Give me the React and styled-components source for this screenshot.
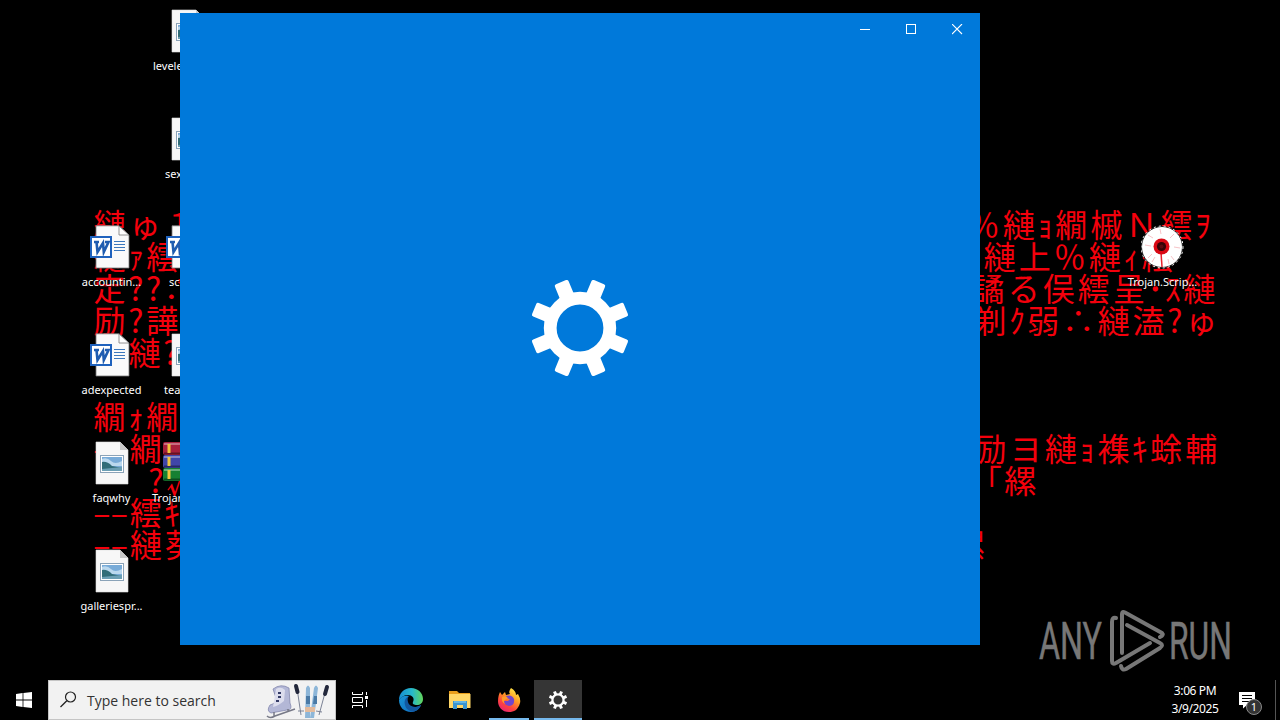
import { useState } from "react";
import styled, { createGlobalStyle } from "styled-components";

const GlobalStyle = createGlobalStyle`
body{
    margin: 0;
    background: #000;
    overflow: hidden;
}
*{
    box-sizing: border-box;
}
`;

const FULL = 35.1;
const HALF = 17.6;

// runs of wallpaper text, half width glyphs take half a cell
const wallpaper = [
    { x: 92, y: 207, text: "縺ゅ１" },
    { x: 92, y: 239, text: "縺ｧ繧" },
    { x: 92, y: 271, text: "定??∴" },
    { x: 92, y: 303, text: "励?譁" },
    { x: 127, y: 335, text: "縺?" },
    { x: 92, y: 399, text: "繝ｫ繝" },
    { x: 93, y: 431, text: "– 繝ｯ" },
    { x: 147, y: 463, text: "?√" },
    { x: 93, y: 495, text: "––繧ｷ" },
    { x: 93, y: 527, text: "––縺葵" },
    { x: 966, y: 207, text: "％縺ｮ繝槭Ｎ繧ｦ" },
    { x: 982, y: 239, text: "縺上％縺ｨ繧" },
    { x: 971, y: 271, text: "譎る俣繧呈･ｽ縺" },
    { x: 973, y: 303, text: "剃ｸ弱∴縺溘?ゅ" },
    { x: 973, y: 431, text: "励ヨ縺ｮ襍ｷ蜍輔" },
    { x: 985, y: 463, text: "｢縲" },
    { x: 951, y: 527, text: "縲" },
];

const desktopLeft = [
    { icon: null },
    { icon: null },
    { icon: "word", label: "accountin..." },
    { icon: "word", label: "adexpected" },
    { icon: "image", label: "faqwhy" },
    { icon: "image", label: "galleriespr..." },
];

const desktopSecond = [
    { icon: "image", label: "levele", start: 4 },
    { icon: "image", label: "sex", start: 16 },
    { icon: "word", label: "sc", start: 20 },
    { icon: "image", label: "tea", start: 15 },
    { icon: "archive", label: "Trojan", start: 3 },
];

function isHalf(char) {
    const code = char.charCodeAt(0);
    return code < 128 || char === "–" || (code >= 0xff61 && code <= 0xff9f);
}

function Wallpaper() {
    return (
        <>
            {wallpaper.map(({ x, y, text }) => (
                <TextRun key={`${x}-${y}`} $x={x} $y={y}>
                    {[...text].map((char, index) => (
                        <Glyph key={index} $half={isHalf(char)}>{char}</Glyph>
                    ))}
                </TextRun>
            ))}
        </>
    );
}

function ImageIcon() {
    return (
        <svg width="44" height="44" viewBox="0 0 44 44">
            <path d="M6 1H30L38 9V43H6Z" fill="#f7f7f7" stroke="#ddd" strokeWidth=".6" />
            <path d="M30 1V9H38Z" fill="#c9c9c9" />
            <rect x="10.5" y="14.5" width="23" height="17" fill="#fff" stroke="#8ba3b8" />
            <rect x="12" y="16" width="20" height="14" fill="#78abd8" />
            <path d="M12 18Q17 16 21 20T32 20V25H12Z" fill="#bad8ee" />
            <path d="M12 21Q17 20 22 25L32 27V30H12Z" fill="#316d78" />
            <path d="M12 28L32 26V30H12Z" fill="#6b9fb4" />
        </svg>
    );
}

function WordIcon() {
    return (
        <svg width="44" height="44" viewBox="0 0 44 44">
            <path d="M6 .8H29L39 10V43H6Z" fill="#fafafa" stroke="#777" strokeWidth=".8" />
            <path d="M29 1V10H39Z" fill="#fff" stroke="#777" strokeWidth=".8" />
            <path d="M24 16.5H35M24 19.5H35M24 22.5H35M24 25.5H35" stroke="#3c78bd" strokeWidth="1" />
            <rect x="1" y="12" width="20" height="20" fill="#fff" stroke="#1f62bd" strokeWidth="2" />
            <path d="M4 17H9M6.5 17L7.5 27L13 18L13.8 27L18.5 17H15" fill="none" stroke="#1f5cb0" strokeWidth="2.6" />
        </svg>
    );
}

function ArchiveIcon() {
    return (
        <svg width="50" height="44" viewBox="-3 0 50 44">
            <rect x="-3" y="1" width="48" height="13" rx="2" fill="#a8203c" />
            <rect x="-3" y="14" width="48" height="13" rx="2" fill="#4046a8" />
            <rect x="-3" y="27" width="48" height="13" rx="2" fill="#168032" />
            <path d="M-2 3H44M-2 16H44M-2 29H44" stroke="#fff" strokeOpacity=".35" strokeWidth="2" />
            <path d="M-2 12.5H44M-2 25.5H44M-2 38.5H44" stroke="#000" strokeOpacity=".4" strokeWidth="2" />
            <path d="M3 3V12M3 16V25M3 29V38" stroke="#f0c53d" strokeWidth="3" />
        </svg>
    );
}

function EyeIcon() {
    return (
        <svg width="44" height="44" viewBox="0 0 44 44">
            <circle cx="21" cy="22" r="20.5" fill="#fff" stroke="#222" />
            <circle cx="21" cy="22" r="21" fill="none" stroke="#fff" strokeDasharray="2 3" />
            <path d="M7 10l5 3M4 20l6 1M7 33l4-4M19 4l1 5M33 9l-4 4M39 23l-6-1M33 35l-3-4M11 37l3-5M28 39l-1-5" stroke="#f7c4c8" fill="none" />
            <path d="M20 27L21 42" stroke="#e8202b" strokeWidth="1.5" />
            <circle cx="20.5" cy="21.5" r="8" fill="#d90814" />
            <circle cx="20.5" cy="21.5" r="4.6" fill="#350407" />
            <circle cx="20.5" cy="21.5" r="2" fill="#5a0b10" />
        </svg>
    );
}

const icons = { image: ImageIcon, word: WordIcon, archive: ArchiveIcon, eye: EyeIcon };

function DesktopItem(props) {
    const { icon, label, start } = props;
    const Icon = icons[icon];
    return (
        <Item>
            {Icon && <Icon />}
            {label && <Label $start={start}>{label}</Label>}
        </Item>
    );
}

function SettingsGear() {
    return (
        <svg width="100" height="100" viewBox="-50 -50 100 100">
            <circle r="29.8" fill="none" stroke="#fff" strokeWidth="12.8" />
            {[0, 1, 2, 3, 4, 5, 6, 7].map(n => (
                <rect
                    key={n}
                    x="-7.4"
                    y="-49.6"
                    width="14.8"
                    height="19"
                    rx="2"
                    fill="#fff"
                    transform={`rotate(${22.5 + n * 45})`}
                />
            ))}
        </svg>
    );
}

function AppWindow({ onClose }) {
    return (
        <Window>
            <TitleBar>
                <Caption aria-label="Minimize">
                    <svg width="11" height="11"><path d="M0 5.5H10" stroke="#fff" /></svg>
                </Caption>
                <Caption aria-label="Maximize">
                    <svg width="11" height="11"><rect x=".5" y=".5" width="9" height="9" fill="none" stroke="#fff" /></svg>
                </Caption>
                <Caption aria-label="Close" onClick={onClose}>
                    <svg width="11" height="11"><path d="M0 0L10 10M10 0L0 10" stroke="#fff" strokeWidth="1.1" /></svg>
                </Caption>
            </TitleBar>
            <Splash><SettingsGear /></Splash>
        </Window>
    );
}

function Watermark() {
    return (
        <Brand>
            <svg width="200" height="70" viewBox="0 0 200 70">
                <g fill="#777" stroke="#777" strokeWidth=".5" fontFamily="Roboto, sans-serif" fontSize="51">
                    <text x="4" y="54" textLength="63" lengthAdjust="spacingAndGlyphs">ANY</text>
                    <text x="134" y="54" textLength="63" lengthAdjust="spacingAndGlyphs">RUN</text>
                </g>
                <g fill="none" stroke="#777" strokeWidth="4" strokeLinecap="round" strokeLinejoin="round">
                    <path d="M87 48V9Q87 6 90 7.5L127 28Q129 30 125 32" />
                    <path d="M81 13Q77 12 77 17V56Q77 60 81 58L115 38" />
                    <path d="M92 20L125 38Q129 40 125 43L91 64Q87 66 86 61" />
                </g>
            </svg>
        </Brand>
    );
}

function SportsArt() {
    return (
        <svg width="66" height="38" viewBox="0 0 66 38">
            <path d="M7 8Q15 2 23 7L24 22Q27 29 21 29L5 32Q0 30 4 24Q11 22 10 17Z" fill="#b3b7d6" stroke="#7b80a8" strokeWidth=".7" />
            <path d="M10 8Q15 5 19 9L18 20Q12 25 7 26" fill="#dcdded" />
            <path d="M12 12h3M12 16h3M10 20h3" stroke="#343b66" strokeWidth="1.8" />
            <path d="M1 35Q4 38 9 35L29 28M8 31V35M22 28V31" fill="none" stroke="#777987" strokeWidth="1.5" />
            <path d="M31 7L35 34M60 8L53 34" stroke="#7b8295" />
            <path d="M30 5L31.5 11M61 6L59 13" stroke="#22273b" strokeWidth="4" strokeLinecap="round" />
            <path d="M32 30L38 30M50 30L56 31" stroke="#7b8295" />
            <path d="M40 7Q42 2 44 7V37H39ZM48 7Q50 2 52 7L48 37H44Z" fill="#8db6d8" />
            <path d="M40 15H44V23H40M48 15H51V23H47" fill="#4a7aa6" />
            <path d="M39 26H49V31H39" fill="#e2bb9d" />
        </svg>
    );
}

function EdgeIcon() {
    return (
        <svg width="24" height="24" viewBox="0 0 24 24">
            <defs>
                <linearGradient id="edgeTop" x1="0" x2="1">
                    <stop stopColor="#168dd3" /><stop offset=".55" stopColor="#27b9cb" /><stop offset="1" stopColor="#62d65a" />
                </linearGradient>
                <linearGradient id="edgeLow" x1="0" x2="1" y2="1">
                    <stop stopColor="#1993d5" /><stop offset="1" stopColor="#0f6bbd" />
                </linearGradient>
            </defs>
            <path d="M0 12C0 5 5 0 12 0S24 5 24 11C24 15 21 17 18 17C15 17 13 16 14 14C16 10 13 7 9 7C5 7 2 9 0 12Z" fill="url(#edgeTop)" />
            <path d="M0 12C2 8 6 7 10 8C7 10 7 13 9 16C12 20 18 20 22 17C20 22 16 24 12 24C5 24 0 19 0 12Z" fill="url(#edgeLow)" />
            <path d="M10 8C6 10 5 13 6 17C7 21 10 23 14 23.8C18 23 21 20 22 17C16 21 10 18 9 14C8 11 9 9 10 8Z" fill="#1258a0" />
        </svg>
    );
}

function FolderIcon() {
    return (
        <svg width="22" height="20" viewBox="0 0 22 20">
            <path d="M0 1H8L10 3H21V18H0Z" fill="#e99e1c" />
            <path d="M0 4H21.5V18H0Z" fill="#ffd667" />
            <path d="M4 11H18V19H14V15H8V19H4Z" fill="#3a94d0" />
            <path d="M5 11H17V13H5Z" fill="#62b5e5" />
        </svg>
    );
}

function FirefoxIcon() {
    return (
        <svg width="24" height="25" viewBox="0 0 24 25">
            <defs>
                <linearGradient id="fox" x1=".8" y1="0" x2=".2" y2="1">
                    <stop stopColor="#fff14a" /><stop offset=".4" stopColor="#ff9a24" /><stop offset=".7" stopColor="#ff443c" /><stop offset="1" stopColor="#e52078" />
                </linearGradient>
            </defs>
            <path d="M3 4L5 7L8 4L9 7L13 6Q11 4 14 0Q19 3 19 7L21 6Q24 11 23 15C21 22 17 24 12 24C5 24 1 19 1 13C1 9 2 6 3 4Z" fill="url(#fox)" />
            <path d="M9 8Q15 6 17 11Q18 18 12 18Q7 17 7 13L11 13L13 11Q10 11 9 8Z" fill="#7145cc" />
            <path d="M5 9Q8 7 11 10L8 12Q6 13 8 16Q4 14 5 9Z" fill="#ff9b28" />
        </svg>
    );
}

function SmallGear() {
    return (
        <svg width="20" height="20" viewBox="-10 -10 20 20">
            <circle r="5.6" fill="none" stroke="#fff" strokeWidth="2.3" />
            {[0, 1, 2, 3, 4, 5, 6, 7].map(n => (
                <rect key={n} x="-1.5" y="-9.2" width="3" height="3.5" fill="#fff" transform={`rotate(${22.5 + n * 45})`} />
            ))}
        </svg>
    );
}

function Taskbar({ onSettings }) {
    return (
        <Bar>
            <StartButton aria-label="Start">
                <svg width="16" height="16" viewBox="0 0 16 16">
                    <path d="M0 2L6.6 1.1V7.4H0ZM7.4 1L16 0V7.4H7.4ZM0 8.4H6.6V14.9L0 14ZM7.4 8.4H16V16L7.4 15Z" fill="#fff" />
                </svg>
            </StartButton>
            <SearchBox>
                <svg width="18" height="18" viewBox="0 0 18 18">
                    <circle cx="11.5" cy="6" r="5" fill="none" stroke="#222" strokeWidth="1.2" />
                    <path d="M7.8 9.7L1.5 16" stroke="#222" strokeWidth="1.3" />
                </svg>
                <SearchText>Type here to search</SearchText>
                <SportsArt />
            </SearchBox>
            <TaskButton>
                <svg width="16" height="16" viewBox="0 0 16 16">
                    <path d="M.5 0V2.5H10.5V0M.5 16V13.5H10.5V16M.5 5.5H10.5V10.5H.5ZM14.5 0V3M14.5 8V15" fill="none" stroke="#fff" />
                    <rect x="13" y="4" width="3" height="3" fill="#fff" />
                </svg>
            </TaskButton>
            <TaskButton $width={54}><EdgeIcon /></TaskButton>
            <TaskButton $width={44}><FolderIcon /></TaskButton>
            <TaskButton $width={50} $gap={2} $running><FirefoxIcon /></TaskButton>
            <TaskButton $active onClick={onSettings}><SmallGear /></TaskButton>
            <Tray>
                <Clock>
                    <span>3:06 PM</span>
                    <span>3/9/2025</span>
                </Clock>
                <Notifications>
                    <svg width="16" height="17" viewBox="0 0 16 17">
                        <path d="M0 0H16V13H8L4 16.5V13H0Z" fill="#fff" />
                        <path d="M3 3.5H13M3 6.5H13M3 9.5H10" stroke="#000" />
                    </svg>
                    <Count>1</Count>
                </Notifications>
                <ShowDesktop />
            </Tray>
        </Bar>
    );
}

function App() {
    const [open, setOpen] = useState(true);

    return (
        <>
            <GlobalStyle />
            <Screen>
                <Desktop>
                    <Wallpaper />
                    <Column>
                        {desktopLeft.map((item, index) => <DesktopItem key={index} {...item} />)}
                    </Column>
                    <Column>
                        {desktopSecond.map((item, index) => <DesktopItem key={index} {...item} />)}
                    </Column>
                    <Column $last>
                        <DesktopItem icon={null} />
                        <DesktopItem icon={null} />
                        <DesktopItem icon="eye" label="Trojan.Scrip..." />
                    </Column>
                    <Watermark />
                    {open && <AppWindow onClose={() => setOpen(false)} />}
                </Desktop>
                <Taskbar onSettings={() => setOpen(!open)} />
            </Screen>
        </>
    );
}

const Screen = styled.div`
    width: 1280px;
    height: 720px;
    display: flex;
    flex-direction: column;
    background: #000;
    font-family: "Noto Sans", "Open Sans", sans-serif;
    color: #fff;
`;
const Desktop = styled.main`
    position: relative;
    height: 680px;
    padding: 9px 80px 0 73px;
    display: flex;
    overflow: hidden;
`;
const TextRun = styled.div`
    position: absolute;
    left: ${({ $x }) => $x}px;
    top: ${({ $y }) => $y}px;
    display: flex;
    height: 32px;
    line-height: 32px;
    font-family: "Noto Sans CJK JP", sans-serif;
    font-size: 32px;
    font-weight: 400;
    color: #f4000c;
`;
const Glyph = styled.span`
    width: ${({ $half }) => $half ? HALF : FULL}px;
    display: flex;
    justify-content: center;
`;
const Column = styled.section`
    position: relative;
    width: 76px;
    display: flex;
    flex-direction: column;
    margin-left: ${({ $last }) => $last ? "auto" : 0};
`;
const Item = styled.article`
    height: 108px;
    flex-shrink: 0;
    display: flex;
    flex-direction: column;
    align-items: center;

    svg{
        display: block;
        margin-left: 1px;
    }
`;
const Label = styled.span`
    align-self: ${({ $start }) => $start ? "flex-start" : "center"};
    margin-left: ${({ $start }) => $start || 1}px;
    margin-top: 5px;
    font-size: 11px;
    line-height: 16px;
    white-space: nowrap;
    text-shadow: 1px 1px 1px #000;
`;
const Window = styled.section`
    position: absolute;
    left: 180px;
    top: 13px;
    width: 800px;
    height: 632px;
    display: flex;
    flex-direction: column;
    background: #0079da;
`;
const TitleBar = styled.header`
    height: 32px;
    display: flex;
    justify-content: flex-end;
`;
const Caption = styled.button`
    width: 46px;
    padding: 0;
    border: 0;
    background: none;
    display: flex;
    align-items: center;
    justify-content: center;
`;
const Splash = styled.div`
    flex: 1;
    display: flex;
    align-items: center;
    justify-content: center;
    padding-bottom: 34px;
`;
const Brand = styled.div`
    position: absolute;
    right: 45px;
    bottom: 5px;

    svg{
        display: block;
    }
`;
const Bar = styled.footer`
    height: 40px;
    display: flex;
    background: #000;
`;
const StartButton = styled.button`
    width: 48px;
    padding: 0;
    border: 0;
    background: none;
    display: flex;
    align-items: center;
    justify-content: center;
`;
const SearchBox = styled.div`
    width: 288px;
    height: 40px;
    padding: 0 3px 0 10px;
    display: flex;
    align-items: center;
    background: #f2f2f2;
    border: 1px solid #c5c5c5;
`;
const SearchText = styled.span`
    flex: 1;
    margin-left: 10px;
    font-family: "Open Sans", sans-serif;
    font-size: 14px;
    white-space: nowrap;
    color: #333;
`;
const TaskButton = styled.button`
    width: ${({ $width }) => $width || 48}px;
    margin: 0 0 0 ${({ $gap }) => $gap || 0}px;
    padding: 0;
    border: 0;
    display: flex;
    align-items: center;
    justify-content: center;
    background: ${({ $active }) => $active ? "#353535" : "none"};
    background-image: ${({ $running, $active }) => $running || $active ? "linear-gradient(#76b9ed, #76b9ed)" : "none"};
    background-size: ${({ $running }) => $running ? "40px 2px" : "100% 2px"};
    background-position: center bottom;
    background-repeat: no-repeat;
`;
const Tray = styled.div`
    margin-left: auto;
    display: flex;
`;
const Clock = styled.div`
    width: 64px;
    padding-top: 2px;
    display: flex;
    flex-direction: column;
    align-items: center;
    font-size: 12px;
    letter-spacing: -0.4px;
    line-height: 18px;
`;
const Notifications = styled.div`
    position: relative;
    width: 48px;
    padding: 12px 0 0 12px;
`;
const Count = styled.span`
    position: absolute;
    left: 19px;
    top: 19px;
    width: 16px;
    height: 16px;
    border: 1px solid #888;
    border-radius: 50%;
    background: #333;
    font-size: 11px;
    line-height: 14px;
    text-align: center;
`;
const ShowDesktop = styled.div`
    width: 5px;
    border-left: 1px solid #555;
`;

export default App;
